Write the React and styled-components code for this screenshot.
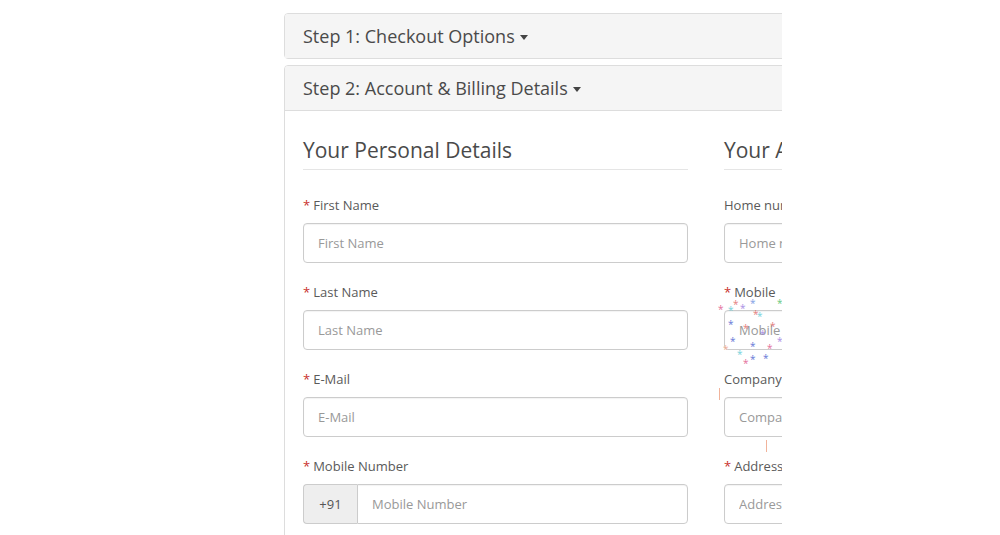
import React from "react";
import styled, { createGlobalStyle } from "styled-components";

const Global = createGlobalStyle`
  body {
    margin: 0;
    background: #fff;
    font-family: "Open Sans", "Noto Sans", sans-serif;
    color: #555;
  }
`;

const Page = styled.div`
  padding: 13px 0 0 284px;
  height: 522px;
  overflow: hidden;
`;

const Clip = styled.div`
  width: 498px;
  overflow: hidden;
`;

const Panel = styled.div`
  width: 900px;
  border: 1px solid #ddd;
  border-radius: 4px;
  margin-bottom: 6px;
  background: #fff;
`;

const PanelHeading = styled.div`
  height: 44px;
  display: flex;
  align-items: center;
  padding: 0 18px;
  background: #f5f5f5;
  border-radius: 3px 3px 0 0;
  border-bottom: ${(p) => (p.$open ? "1px solid #ddd" : "none")};
  font-size: 18px;
  color: #4a4a4a;
`;

const Caret = styled.span`
  display: inline-block;
  width: 0;
  height: 0;
  margin-left: 5px;
  margin-top: 2px;
  border-top: 5px solid #444;
  border-left: 4px solid transparent;
  border-right: 4px solid transparent;
`;

const PanelBody = styled.div`
  padding: 24px 18px 0;
  display: grid;
  grid-template-columns: 385px 385px;
  column-gap: 36px;
`;

const Column = styled.fieldset`
  border: 0;
  margin: 0;
  padding: 0;
  min-width: 0;
  position: relative;
`;

const Legend = styled.div`
  font-size: 21px;
  line-height: 30px;
  color: #4a4a4a;
  padding-bottom: 4px;
  border-bottom: 1px solid #e5e5e5;
  margin-bottom: 25px;
  white-space: nowrap;
`;

const Group = styled.div`
  margin-bottom: 19px;
`;

const Label = styled.label`
  display: block;
  font-size: 13px;
  line-height: 20px;
  color: #5a5a5a;
  margin-bottom: 8px;
  white-space: nowrap;
`;

const Star = styled.span`
  color: #c9302c;
  margin-right: 3px;
`;

const Input = styled.input`
  display: block;
  box-sizing: border-box;
  width: 100%;
  height: 40px;
  padding: 0 14px;
  border: 1px solid #ccc;
  border-radius: 4px;
  font-family: inherit;
  font-size: 13px;
  color: #555;
  background: #fff;
  box-shadow: inset 0 1px 1px rgba(0, 0, 0, 0.05);
  &::placeholder {
    color: #999;
  }
  ${(p) => p.$joined && "border-radius: 0 4px 4px 0; flex: 1;"}
`;

const InputGroup = styled.div`
  display: flex;
`;

const Addon = styled.span`
  box-sizing: border-box;
  width: 54px;
  height: 40px;
  display: flex;
  align-items: center;
  justify-content: center;
  background: #eee;
  border: 1px solid #ccc;
  border-right: 0;
  border-radius: 4px 0 0 4px;
  font-size: 13px;
  color: #555;
`;

const Sparkle = styled.span`
  position: absolute;
  font-size: 10px;
  line-height: 1;
  color: ${(p) => p.$color};
  opacity: 0.85;
  pointer-events: none;
`;

const Tick = styled.span`
  position: absolute;
  width: 1px;
  height: 12px;
  background: #f1b39b;
`;

// scattered coloured asterisks over the mobile field (artifact in the shot)
const sparkles = [
  [-6, 169, "#e0558a"], [4, 170, "#5ecbd6"], [9, 164, "#e06868"],
  [16, 168, "#9a7be0"], [26, 163, "#6a8fe0"], [29, 174, "#e06868"],
  [53, 163, "#4ac06a"], [33, 176, "#5ecbd6"], [46, 186, "#e06868"],
  [4, 184, "#4a5fd0"], [19, 188, "#e06868"], [36, 194, "#9a7be0"],
  [6, 201, "#4a5fd0"], [26, 206, "#4a5fd0"], [43, 208, "#e0558a"],
  [53, 201, "#9a7be0"], [-1, 209, "#f1a58a"], [13, 214, "#5ecbd6"],
  [26, 219, "#4a5fd0"], [39, 218, "#4a5fd0"], [19, 223, "#e0558a"],
];

const left = [
  { label: "First Name", required: true },
  { label: "Last Name", required: true },
  { label: "E-Mail", required: true },
];

const right = [
  { label: "Home number", placeholder: "Home number" },
  { label: "Mobile", placeholder: "Mobile", required: true },
  { label: "Company", placeholder: "Company" },
  { label: "Address", placeholder: "Address", required: true },
];

const Field = ({ label, placeholder, required }) => (
  <Group>
    <Label>
      {required && <Star>*</Star>}
      {label}
    </Label>
    <Input placeholder={placeholder || label} />
  </Group>
);

export default function App() {
  return (
    <Page>
      <Global />
      <Clip>
        <Panel>
          <PanelHeading>
            Step 1: Checkout Options
            <Caret />
          </PanelHeading>
        </Panel>
        <Panel>
          <PanelHeading $open>
            Step 2: Account &amp; Billing Details
            <Caret />
          </PanelHeading>
          <PanelBody>
            <Column>
              <Legend>Your Personal Details</Legend>
              {left.map((f) => (
                <Field key={f.label} {...f} />
              ))}
              <Group>
                <Label>
                  <Star>*</Star>Mobile Number
                </Label>
                <InputGroup>
                  <Addon>+91</Addon>
                  <Input $joined placeholder="Mobile Number" />
                </InputGroup>
              </Group>
            </Column>
            <Column>
              <Legend>Your Address</Legend>
              {right.map((f) => (
                <Field key={f.label} {...f} />
              ))}
              {sparkles.map(([x, y, c], i) => (
                <Sparkle key={i} $color={c} style={{ left: x, top: y }}>
                  *
                </Sparkle>
              ))}
              <Tick style={{ left: -5, top: 253 }} />
              <Tick style={{ left: 42, top: 305 }} />
            </Column>
          </PanelBody>
        </Panel>
      </Clip>
    </Page>
  );
}
